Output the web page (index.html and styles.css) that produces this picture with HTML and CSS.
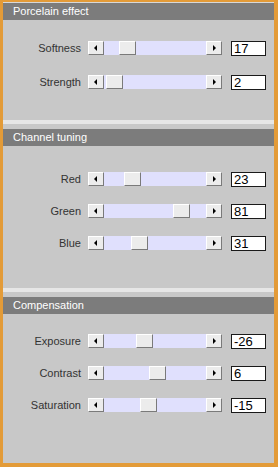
FILE: index.html
```html
<!DOCTYPE html>
<html>
<head>
<meta charset="utf-8">
<link rel="stylesheet" href="styles.css">
</head>
<body>
<div class="panel">
  <section class="group group-first">
    <div class="edge edge-top"></div>
    <div class="head">Porcelain effect</div>
    <div class="rows rows-a">
      <div class="row">
        <span class="label">Softness</span>
        <div class="sb"><span class="btn l"></span><span class="track"><span class="thumb" style="left:15px"></span></span><span class="btn r"></span></div>
        <span class="val">17</span>
      </div>
      <div class="row">
        <span class="label">Strength</span>
        <div class="sb"><span class="btn l"></span><span class="track"><span class="thumb" style="left:2px"></span></span><span class="btn r"></span></div>
        <span class="val">2</span>
      </div>
    </div>
  </section>
  <section class="group">
    <div class="edge"></div>
    <div class="head">Channel tuning</div>
    <div class="rows rows-b">
      <div class="row">
        <span class="label">Red</span>
        <div class="sb"><span class="btn l"></span><span class="track"><span class="thumb" style="left:20px"></span></span><span class="btn r"></span></div>
        <span class="val">23</span>
      </div>
      <div class="row">
        <span class="label">Green</span>
        <div class="sb"><span class="btn l"></span><span class="track"><span class="thumb" style="left:69px"></span></span><span class="btn r"></span></div>
        <span class="val">81</span>
      </div>
      <div class="row">
        <span class="label">Blue</span>
        <div class="sb"><span class="btn l"></span><span class="track"><span class="thumb" style="left:27px"></span></span><span class="btn r"></span></div>
        <span class="val">31</span>
      </div>
    </div>
  </section>
  <section class="group group-last">
    <div class="edge"></div>
    <div class="head">Compensation</div>
    <div class="rows rows-c">
      <div class="row">
        <span class="label">Exposure</span>
        <div class="sb"><span class="btn l"></span><span class="track"><span class="thumb" style="left:32px"></span></span><span class="btn r"></span></div>
        <span class="val">-26</span>
      </div>
      <div class="row">
        <span class="label">Contrast</span>
        <div class="sb"><span class="btn l"></span><span class="track"><span class="thumb" style="left:45px"></span></span><span class="btn r"></span></div>
        <span class="val">6</span>
      </div>
      <div class="row">
        <span class="label">Saturation</span>
        <div class="sb"><span class="btn l"></span><span class="track"><span class="thumb" style="left:36px"></span></span><span class="btn r"></span></div>
        <span class="val">-15</span>
      </div>
    </div>
  </section>
</div>
</body>
</html>
```

FILE: styles.css
```css
html, body {
  margin: 0;
  padding: 0;
}
body {
  background: #e39b38;
  width: 278px;
  height: 467px;
  padding: 2px 4px 4px 3px;
  box-sizing: border-box;
  font-family: "Liberation Sans", Arial, sans-serif;
}
.panel {
  background: #c8c8c8;
  height: 100%;
  display: flex;
  flex-direction: column;
}
.group-last {
  flex: 1;
}
.edge {
  height: 4px;
  background: #e6e6e6;
  margin-bottom: 5px;
}
.edge-top {
  height: 1px;
  background: #d8d8d8;
  margin-bottom: 0;
}
.head {
  height: 17px;
  background: #7c7c7c;
  color: #ffffff;
  font-size: 11px;
  line-height: 17px;
  padding-left: 10px;
}
.rows {
  display: flex;
  flex-direction: column;
}
.rows-a {
  padding: 21px 0 31px;
  gap: 20px;
}
.rows-b {
  padding: 26px 0 38px;
  gap: 18px;
}
.rows-c {
  padding: 20px 0 0;
  gap: 18px;
}
.row {
  display: flex;
  align-items: center;
  height: 14px;
}
.label {
  width: 78px;
  text-align: right;
  font-size: 11px;
  color: #333333;
  margin-right: 7px;
}
.sb {
  display: flex;
  height: 14px;
  width: 134px;
}
.btn, .thumb {
  box-sizing: border-box;
  background: #ececec;
  border-top: 1px solid #ffffff;
  border-left: 1px solid #ffffff;
  border-right: 1px solid #7a7a7a;
  border-bottom: 1px solid #7a7a7a;
}
.btn {
  width: 16px;
  height: 14px;
  position: relative;
}
.btn::after {
  content: "";
  position: absolute;
  top: 3px;
  width: 0;
  height: 0;
  border-top: 3px solid transparent;
  border-bottom: 3px solid transparent;
}
.btn.l::after {
  left: 5px;
  border-right: 3px solid #000;
}
.btn.r::after {
  left: 6px;
  border-left: 3px solid #000;
}
.track {
  flex: 1;
  background: #e0e0fd;
  position: relative;
}
.thumb {
  position: absolute;
  top: 0;
  width: 17px;
  height: 14px;
}
.val {
  margin-left: 9px;
  width: 35px;
  height: 15px;
  box-sizing: border-box;
  background: #ffffff;
  border: 1px solid #1a1a1a;
  font-size: 13px;
  line-height: 13px;
  padding-left: 2px;
  color: #000;
}
```
